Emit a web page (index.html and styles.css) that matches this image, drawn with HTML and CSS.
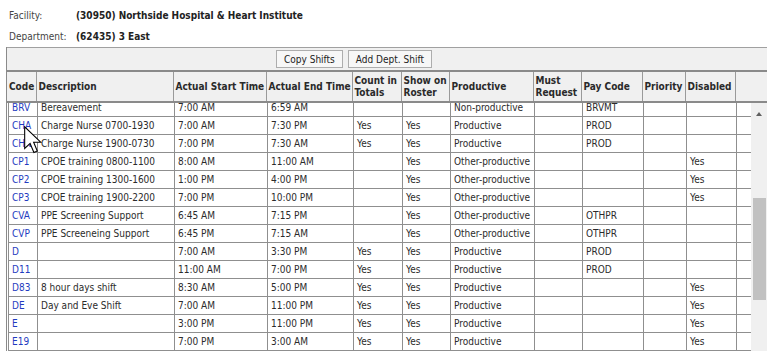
FILE: index.html
```html
<!DOCTYPE html>
<html>
<head>
<meta charset="utf-8">
<link rel="stylesheet" href="styles.css">
</head>
<body>
<div class="info">
  <div class="info-row"><span class="lbl">Facility:</span><span class="val">(30950) Northside Hospital &amp; Heart Institute</span></div>
  <div class="info-row"><span class="lbl">Department:</span><span class="val">(62435) 3 East</span></div>
</div>
<div class="grid">
  <div class="toolbar">
    <button class="btn">Copy Shifts</button>
    <button class="btn">Add Dept. Shift</button>
  </div>
  <table class="head">
    <colgroup>
      <col class="c-code"><col class="c-desc"><col class="c-start"><col class="c-end"><col class="c-count"><col class="c-show"><col class="c-prod"><col class="c-must"><col class="c-pay"><col class="c-pri"><col class="c-dis"><col class="c-hx">
    </colgroup>
    <tr>
      <th>Code</th><th>Description</th><th>Actual Start Time</th><th>Actual End Time</th><th>Count in<br>Totals</th><th>Show on<br>Roster</th><th>Productive</th><th>Must<br>Request</th><th>Pay Code</th><th>Priority</th><th>Disabled</th><th></th>
    </tr>
  </table>
  <div class="body-wrap">
    <div class="body-view">
      <table class="rows">
        <colgroup>
          <col class="c-code"><col class="c-desc"><col class="c-start"><col class="c-end"><col class="c-count"><col class="c-show"><col class="c-prod"><col class="c-must"><col class="c-pay"><col class="c-pri"><col class="c-dis"><col class="c-x">
        </colgroup>
        <tr><td><a class="code">BRV</a></td><td>Bereavement</td><td>7:00 AM</td><td>6:59 AM</td><td></td><td></td><td>Non-productive</td><td></td><td>BRVMT</td><td></td><td></td><td></td></tr>
        <tr><td><a class="code">CHA</a></td><td>Charge Nurse 0700-1930</td><td>7:00 AM</td><td>7:30 PM</td><td>Yes</td><td>Yes</td><td>Productive</td><td></td><td>PROD</td><td></td><td></td><td></td></tr>
        <tr><td><a class="code">CHN</a></td><td>Charge Nurse 1900-0730</td><td>7:00 PM</td><td>7:30 AM</td><td>Yes</td><td>Yes</td><td>Productive</td><td></td><td>PROD</td><td></td><td></td><td></td></tr>
        <tr><td><a class="code">CP1</a></td><td>CPOE training 0800-1100</td><td>8:00 AM</td><td>11:00 AM</td><td></td><td>Yes</td><td>Other-productive</td><td></td><td></td><td></td><td>Yes</td><td></td></tr>
        <tr><td><a class="code">CP2</a></td><td>CPOE training 1300-1600</td><td>1:00 PM</td><td>4:00 PM</td><td></td><td>Yes</td><td>Other-productive</td><td></td><td></td><td></td><td>Yes</td><td></td></tr>
        <tr><td><a class="code">CP3</a></td><td>CPOE training 1900-2200</td><td>7:00 PM</td><td>10:00 PM</td><td></td><td>Yes</td><td>Other-productive</td><td></td><td></td><td></td><td>Yes</td><td></td></tr>
        <tr><td><a class="code">CVA</a></td><td>PPE Screening Support</td><td>6:45 AM</td><td>7:15 PM</td><td></td><td>Yes</td><td>Other-productive</td><td></td><td>OTHPR</td><td></td><td></td><td></td></tr>
        <tr><td><a class="code">CVP</a></td><td>PPE Screeneing Support</td><td>6:45 PM</td><td>7:15 AM</td><td></td><td>Yes</td><td>Other-productive</td><td></td><td>OTHPR</td><td></td><td></td><td></td></tr>
        <tr><td><a class="code">D</a></td><td></td><td>7:00 AM</td><td>3:30 PM</td><td>Yes</td><td>Yes</td><td>Productive</td><td></td><td>PROD</td><td></td><td></td><td></td></tr>
        <tr><td><a class="code">D11</a></td><td></td><td>11:00 AM</td><td>7:00 PM</td><td>Yes</td><td>Yes</td><td>Productive</td><td></td><td>PROD</td><td></td><td></td><td></td></tr>
        <tr><td><a class="code">D83</a></td><td>8 hour days shift</td><td>8:30 AM</td><td>5:00 PM</td><td>Yes</td><td>Yes</td><td>Productive</td><td></td><td></td><td></td><td>Yes</td><td></td></tr>
        <tr><td><a class="code">DE</a></td><td>Day and Eve Shift</td><td>7:00 AM</td><td>11:00 PM</td><td>Yes</td><td>Yes</td><td>Productive</td><td></td><td></td><td></td><td>Yes</td><td></td></tr>
        <tr><td><a class="code">E</a></td><td></td><td>3:00 PM</td><td>11:00 PM</td><td>Yes</td><td>Yes</td><td>Productive</td><td></td><td></td><td></td><td>Yes</td><td></td></tr>
        <tr><td><a class="code">E19</a></td><td></td><td>7:00 PM</td><td>3:00 AM</td><td>Yes</td><td>Yes</td><td>Productive</td><td></td><td></td><td></td><td>Yes</td><td></td></tr>
      </table>
    </div>
    <div class="scrollbar">
      <div class="arrow-up"></div>
      <div class="thumb"></div>
    </div>
  </div>
</div>
<svg class="cursor" width="19" height="30" viewBox="0 0 14 22"><path d="M0.5 0.5 L0.5 16.5 L4.5 12.8 L7.3 19.5 L9.8 18.4 L7.1 11.9 L12.3 11.9 Z" fill="#fff" stroke="#000" stroke-width="0.8"/></svg>
</body>
</html>
```
FILE: styles.css
```css
html, body {
  margin: 0;
  padding: 0;
  overflow: hidden;
  background: #fff;
}
body {
  font-family: "DejaVu Sans Condensed", "DejaVu Sans", sans-serif;
  font-stretch: condensed;
  font-size: 10px;
  color: #222;
  position: relative;
  width: 767px;
  height: 351px;
}
.info {
  padding: 7px 0 0 9px;
  display: flex;
  flex-direction: column;
  gap: 5px;
}
.info-row {
  display: flex;
  height: 16px;
  align-items: center;
}
.lbl {
  width: 67px;
  color: #444;
}
.val {
  font-weight: bold;
  color: #222;
}
.grid {
  margin: 3px 0 0 6px;
  width: 770px;
  border-left: 1px solid #8a8a8a;
}
.toolbar {
  background: #f0f0f0;
  border-top: 1px solid #a0a0a0;
  border-bottom: 2px solid #8a8a8a;
  height: 22px;
  display: flex;
  align-items: center;
  padding-left: 269px;
  gap: 5px;
}
.btn {
  font: inherit;
  color: #222;
  height: 18px;
  padding: 0 7px;
  background: #f7f7f7;
  border: 1px solid #adadad;
  border-radius: 0;
  margin: 0;
}
table {
  border-collapse: collapse;
  table-layout: fixed;
}
.head {
  width: 761px;
  background: #f0f0f0;
}
.head th {
  height: 29px;
  padding: 0 2px;
  text-align: left;
  font-weight: bold;
  color: #2a2a2a;
  line-height: 12px;
  border-right: 1px solid #9a9a9a;
  border-bottom: 2px solid #8a8a8a;
  white-space: nowrap;
  overflow: hidden;
  vertical-align: middle;
}
.c-code { width: 29px; }
.c-desc { width: 137px; }
.c-start { width: 93px; }
.c-end { width: 86px; }
.c-count { width: 49px; }
.c-show { width: 48px; }
.c-prod { width: 84px; }
.c-must { width: 48px; }
.c-pay { width: 61px; }
.c-pri { width: 43px; }
.c-dis { width: 50px; }
.c-x { width: 16px; }
.c-hx { width: 33px; }
.body-wrap {
  display: flex;
  height: 260px;
}
.body-view {
  width: 743px;
  overflow: hidden;
  padding-left: 1px;
}
.rows {
  width: 743px;
  margin-top: -5px;
}
.rows td {
  height: 17px;
  padding: 0 3px;
  border: 1px solid #8f8f8f;
  white-space: nowrap;
  overflow: hidden;
  color: #2b2b2b;
}
.code {
  color: #1f3cc0;
}
.scrollbar {
  width: 17px;
  background: #f0f0f0;
  position: relative;
}
.arrow-up {
  position: absolute;
  left: 5px;
  top: 9px;
  width: 0;
  height: 0;
  border-left: 3.5px solid transparent;
  border-right: 3.5px solid transparent;
  border-bottom: 4px solid #606060;
}
.thumb {
  position: absolute;
  left: 2px;
  top: 95px;
  width: 13px;
  height: 102px;
  background: #c1c1c1;
}
.cursor {
  position: absolute;
  left: 24px;
  top: 126px;
}
```
